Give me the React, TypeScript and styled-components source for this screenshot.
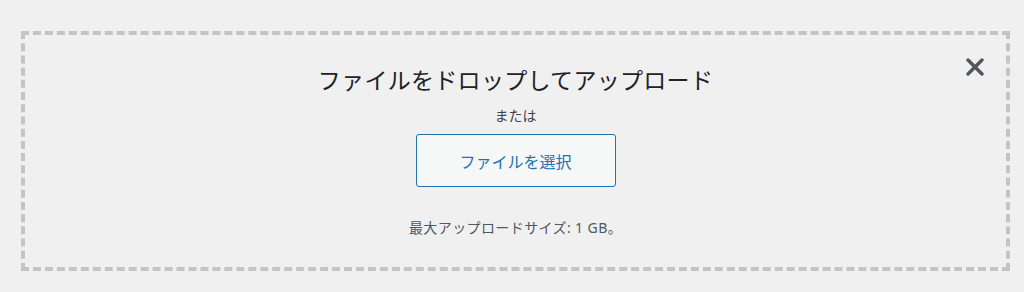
import styled, { createGlobalStyle } from "styled-components";

const GlobalStyle = createGlobalStyle`
  html, body {
    margin: 0;
    padding: 0;
    background: #f0f0f1;
    font-family: "Noto Sans", "Noto Sans CJK JP", sans-serif;
  }
`;

const Page = styled.div`
  padding: 31px 14px 21px 21px;
`;

const DropZone = styled.div`
  position: relative;
  border: 4px dashed #c3c4c7;
  height: 232px;
  box-sizing: content-box;
  display: flex;
  flex-direction: column;
  align-items: center;
`;

const Instructions = styled.h2`
  margin: 30px 0 0;
  font-size: 23px;
  font-weight: 400;
  line-height: 30px;
  letter-spacing: 0.3px;
  color: #1d2327;
`;

const Or = styled.p`
  margin: 11px 0 0;
  font-size: 14px;
  line-height: 20px;
  color: #3c434a;
`;

const SelectButton = styled.button`
  margin-top: 8px;
  width: 200px;
  height: 53px;
  border: 1px solid #2271b1;
  border-radius: 3px;
  background: #f6f7f7;
  color: #2271b1;
  font-family: inherit;
  font-size: 16px;
  cursor: pointer;
`;

const MaxSize = styled.p`
  margin: 31px 0 0;
  font-size: 14px;
  line-height: 20px;
  letter-spacing: 0.4px;
  color: #50575e;
`;

const CloseButton = styled.button`
  position: absolute;
  top: 17px;
  right: 16px;
  width: 30px;
  height: 30px;
  padding: 0;
  border: none;
  background: none;
  color: #50575e;
  display: flex;
  align-items: center;
  justify-content: center;
  cursor: pointer;
`;

export default function App() {
  return (
    <>
      <GlobalStyle />
      <Page>
        <DropZone>
          <CloseButton aria-label="閉じる">
            <svg width="18" height="18" viewBox="0 0 18 18">
              <path
                d="M2 2 L16 16 M16 2 L2 16"
                stroke="currentColor"
                strokeWidth="3.4"
                strokeLinecap="round"
              />
            </svg>
          </CloseButton>
          <Instructions>ファイルをドロップしてアップロード</Instructions>
          <Or>または</Or>
          <SelectButton>ファイルを選択</SelectButton>
          <MaxSize>最大アップロードサイズ: 1 GB。</MaxSize>
        </DropZone>
      </Page>
    </>
  );
}
